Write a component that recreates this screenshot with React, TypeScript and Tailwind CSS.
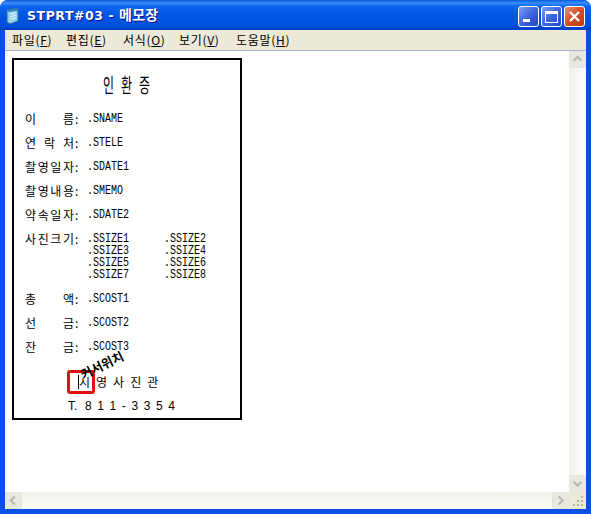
const kr = "font-['Noto_Sans_CJK_KR','Liberation_Sans',sans-serif]";

function Lat({ children }: { children: React.ReactNode }) {
  return <span className="inline-block origin-left scale-x-[0.77] font-['Liberation_Mono',monospace] text-[13px] whitespace-pre">{children}</span>;
}

function Label({ chars }: { chars: string[] }) {
  return (
    <div className="flex items-center w-[62px]">
      <div className="flex justify-between w-[49px]">
        {chars.map((c, i) => <span key={i}>{c}</span>)}
      </div>
      <span className="ml-[1px]">:</span>
    </div>
  );
}

function Row({ chars, value }: { chars: string[]; value: string }) {
  return (
    <div className="flex items-center h-[24px]">
      <Label chars={chars} />
      <Lat>{value}</Lat>
    </div>
  );
}

function Spaced({ chars, gap, className }: { chars: string[]; gap: string; className?: string }) {
  return (
    <div className={`flex ${gap} ${className ?? ""}`}>
      {chars.map((c, i) => <span key={i}>{c}</span>)}
    </div>
  );
}

function CtlBtn({ kind }: { kind: "min" | "max" | "close" }) {
  const bg = kind === "close"
    ? "bg-[linear-gradient(135deg,#e8947a,#d8502c_45%,#c23a10)]"
    : "bg-[linear-gradient(135deg,#7f9ff2,#3c66e0_50%,#2348c4)]";
  return (
    <div className={`w-[21px] h-[21px] rounded-[3px] border border-white flex items-center justify-center ${bg}`}>
      {kind === "min" && <div className="w-[7px] h-[3px] bg-white mt-[8px] mr-[4px]" />}
      {kind === "max" && <div className="w-[13px] h-[12px] border border-white border-t-[3px]" />}
      {kind === "close" && (
        <svg width="13" height="13" viewBox="0 0 13 13">
          <path d="M2 2L11 11M11 2L2 11" stroke="#fff" strokeWidth="2.4" />
        </svg>
      )}
    </div>
  );
}

function ScrollBtn({ dir }: { dir: "up" | "down" | "left" | "right" }) {
  const d = {
    up: "M4 10L8.5 5.5L13 10",
    down: "M4 6.5L8.5 11L13 6.5",
    left: "M10 4L5.5 8.5L10 13",
    right: "M6.5 4L11 8.5L6.5 13",
  }[dir];
  return (
    <div className="w-[17px] h-[17px] shrink-0 rounded-[2px] border border-[#e6e5dc] bg-[#e9e8e0] flex items-center justify-center">
      <svg width="17" height="17" viewBox="0 0 17 17">
        <path d={d} fill="none" stroke="#b9b8ac" strokeWidth="2.4" />
      </svg>
    </div>
  );
}

const menus = [
  ["파일(", "F", ")", "w-[54px]"],
  ["편집(", "E", ")", "w-[57px]"],
  ["서식(", "O", ")", "w-[56px]"],
  ["보기(", "V", ")", "w-[57px]"],
  ["도움말(", "H", ")", "w-[60px]"],
];

export default function App() {
  return (
    <div className={`w-[591px] h-[514px] flex flex-col overflow-hidden rounded-t-[8px] bg-[#0a4fe6] ${kr} text-[12px] text-black`}>
      <div className="h-[30px] shrink-0 flex items-center pl-[5px] pr-[6px] bg-[linear-gradient(180deg,#0a5bd8_0%,#3a8dfa_10%,#0a62ee_22%,#0054e3_60%,#0050dc_85%,#003cc0_100%)]">
        <svg width="17" height="18" viewBox="0 0 17 18" className="shrink-0 mt-[2px]">
          <path d="M2 3L13 1V14L5 17L2 15Z" fill="#8fd0ee" stroke="#2b6c9e" />
          <path d="M3 2.5L13 1V3.5L3 5Z" fill="#2f7fb8" />
          <path d="M5 7L11 6M5 9.5L11 8.5M5 12L11 11" stroke="#e6f4fc" />
        </svg>
        <span className="ml-[5px] text-white font-bold text-[14px] tracking-[0.2px] font-['DejaVu_Sans','Noto_Sans_CJK_KR',sans-serif] [text-shadow:1px_1px_#0f1089] whitespace-pre">
          <span className="text-[12.5px] tracking-[0.55px]">STPRT#03 - </span>메모장
        </span>
        <div className="ml-auto flex gap-[2px] mt-[3px]">
          <CtlBtn kind="min" />
          <CtlBtn kind="max" />
          <CtlBtn kind="close" />
        </div>
      </div>

      <div className="flex-1 min-h-0 flex flex-col mx-[5px] mb-[5px] bg-white">
        <div className="h-[20px] shrink-0 bg-[#ece9d8] flex items-center pl-[7px]">
          {menus.map(([a, b, c, w]) => (
            <span key={b} className={`whitespace-pre tracking-[0.7px] ${w}`}>
              {a}<span className="underline">{b}</span>{c}
            </span>
          ))}
        </div>
        <div className="flex-1 min-h-0 flex flex-col border-t border-[#a0b8d0]">
          <div className="flex-1 min-h-0 flex">
            <div className="flex-1 pt-[7px] pl-[7px]">
              <div className="relative w-[230px] h-[362px] border-2 border-black pl-[11px] pt-[11px]">
                <Spaced
                  chars={["인", "환", "증"]}
                  gap="gap-[7px]"
                  className="ml-[78px] h-[35px] text-[12px] leading-[30px] [&>span]:scale-y-[1.7]"
                />
                <div className="mt-[1px]">
                  <Row chars={["이", "름"]} value=".SNAME" />
                  <Row chars={["연", "락", "처"]} value=".STELE" />
                  <Row chars={["촬", "영", "일", "자"]} value=".SDATE1" />
                  <Row chars={["촬", "영", "내", "용"]} value=".SMEMO" />
                  <Row chars={["약", "속", "일", "자"]} value=".SDATE2" />
                </div>
                <div className="flex items-start pt-[6px] h-[60px]">
                  <div className="h-[12px] flex items-center"><Label chars={["사", "진", "크", "기"]} /></div>
                  <div className="grid grid-cols-[77px_77px] leading-[12px] [&>span]:h-[12px]">
                    {["1", "2", "3", "4", "5", "6", "7", "8"].map((n) => (
                      <span key={n} className="flex items-center"><Lat>{`.SSIZE${n}`}</Lat></span>
                    ))}
                  </div>
                </div>
                <Row chars={["총", "액"]} value=".SCOST1" />
                <Row chars={["선", "금"]} value=".SCOST2" />
                <Row chars={["잔", "금"]} value=".SCOST3" />
                <Spaced chars={["시", "영", "사", "진", "관"]} gap="gap-[6px]" className="ml-[54px] mt-[11px] h-[24px] items-center" />
                <div className="ml-[43px] h-[24px] flex items-center gap-[5.6px] font-['Liberation_Sans',sans-serif]">
                  {["T.", "8", "1", "1", "-", "3", "3", "5", "4"].map((c, i) => <span key={i} className={i === 0 ? "mr-[2px]" : ""}>{c}</span>)}
                </div>
                <div className="absolute left-[53px] top-[310px] w-[28px] h-[24px] rounded-[3px] border-[3px] border-[#e01010]" />
                <div className="absolute left-[64px] top-[315px] w-px h-[14px] bg-black" />
                <div className="absolute left-[65px] top-[299px] font-bold text-[12.5px] leading-none whitespace-pre -rotate-[26deg]">커서위치</div>
              </div>
            </div>
            <div className="w-[17px] shrink-0 flex flex-col bg-[linear-gradient(90deg,#f3f1ec,#fdfdfa)]">
              <ScrollBtn dir="up" />
              <div className="flex-1" />
              <ScrollBtn dir="down" />
            </div>
          </div>
          <div className="h-[17px] shrink-0 flex bg-[linear-gradient(180deg,#f3f1ec,#fdfdfa)]">
            <ScrollBtn dir="left" />
            <div className="flex-1" />
            <ScrollBtn dir="right" />
            <div className="w-[17px] h-[17px] shrink-0 bg-[#ece9d8] flex items-end justify-end pb-[2px] pr-[2px]">
              <svg width="12" height="12" viewBox="0 0 12 12">
                <path d="M9 1h2v2H9zM5 5h2v2H5zM9 5h2v2H9zM1 9h2v2H1zM5 9h2v2H5zM9 9h2v2H9z" fill="#b8b4a0" />
              </svg>
            </div>
          </div>
        </div>
      </div>
    </div>
  );
}
